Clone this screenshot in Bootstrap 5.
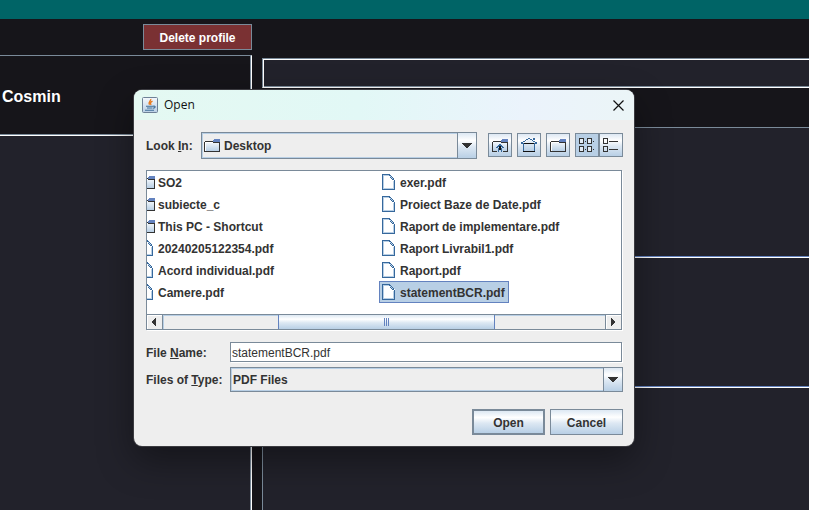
<!DOCTYPE html>
<html lang="en">
<head>
<meta charset="utf-8">
<meta name="viewport" content="width=device-width, initial-scale=1">
<title>Open</title>
<link href="https://cdn.jsdelivr.net/npm/bootstrap@5.3.0/dist/css/bootstrap.min.css" rel="stylesheet">
<style>
:root { --line: #7a8a99; --steel: linear-gradient(#dde8f3 0%, #ffffff 30%, #dde8f3 55%, #b8cfe5 100%); }
body { font-family: "Liberation Sans", Arial, sans-serif; font-size: 12px; line-height: 16px; color: #333; background: #fff; }
.app-window { background: #16151a; margin-right: 10px; }
.top-strip { height: 19px; background: #006466; }
.side-pane { width: 252px; }
.tool-strip { height: 36px; padding-top: 5px; }
.btn-delete { width: 109px; height: 26px; background: #7a3133; border: 1px solid var(--line); color: #fff; font-weight: 700; padding: 2px 0 0; }
.profile-frame { border-top: 1px solid var(--line); border-right: 1px solid #fff; box-shadow: inset -1px 0 var(--line); }
.profile-head { height: 80px; border-bottom: 1px solid #fff; box-shadow: inset 0 -1px var(--line); padding: 2px 2px 0; color: #fff; font-size: 16px; font-weight: 700; margin-right: 1px; }
.pane-fill { background: #22222b; margin-right: 1px; }
.main-pane { padding: 39px 0 0 10px; }
.title-frame { height: 30px; background: #22222b; border: 1px solid var(--line); border-right: 0; border-bottom-color: #fff; box-shadow: inset 1px 1px #fff, inset 0 -1px var(--line); }
.feed { margin-top: 39px; border-top: 1px solid var(--line); border-left: 1px solid var(--line); background: #22222b; }
.feed-item { height: 130px; border-bottom: 1px solid #fff; box-shadow: inset 0 -1px #6382bf; }

.file-dialog { position: absolute; left: 134px; top: 90px; width: 500px; background: #eee; border-radius: 8px; overflow: hidden; box-shadow: 0 0 0 1px #3b3b40, 0 14px 36px rgba(0,0,0,.4); }
.title-bar { height: 30px; padding: 0 8px; gap: 6px; background: linear-gradient(90deg, #e4f9f2 0%, #e2f8f6 45%, #ebf3fc 78%, #ebf5f7 100%); font-family: "Open Sans", "Noto Sans", sans-serif; color: #111; }
.close-btn { width: 15px; height: 24px; }
.dialog-body { padding: 12px 11px 11px 12px; font-weight: 700; }
.combo { position: relative; }
.combo select { width: 100%; height: 100%; appearance: none; border: 1px solid var(--line); border-radius: 0; background: #eee; box-shadow: inset 0 0 0 1px #b8cfe5; color: #333; font-weight: 700; padding: 0 22px 0 2px; }
.combo .combo-arrow { position: absolute; right: 0; top: 0; bottom: 0; width: 20px; border: 1px solid var(--line); background: var(--steel); pointer-events: none; }
.combo .combo-icon { position: absolute; left: 3px; top: 5px; pointer-events: none; }
.look-label { width: 44px; white-space: nowrap; }
.look-combo { height: 27px; margin: 0 11px; }
.look-combo select { padding-left: 22px; }
.type-combo { height: 25px; }
.tool-set { gap: 5px; margin-bottom: 1px; }
.tool-btn { width: 24px; height: 24px; padding: 0; border: 1px solid var(--line); background: var(--steel); display: grid; place-items: center; }
.tool-btn.picked { background: #b8cfe5; }
.file-frame { margin-top: 11px; margin-right: 1px; border: 1px solid var(--line); background: #fff; box-shadow: 1px 1px #fff; overflow: hidden; }
.file-columns { height: 143px; margin-left: -10px; }
.file-col { width: 242px; }
.file-item { height: 22px; padding: 0 3px 0 1px; border: 1px solid transparent; background: none; color: #333; font-weight: 700; display: flex; align-items: center; gap: 3px; width: max-content; }
.file-item span { padding-top: 2px; }
.file-item.picked { background: #b8cfe5; border-color: #6382bf; }
.scroll-row { height: 15px; border-top: 1px solid var(--line); background: #eee; }
.scroll-end { width: 16px; padding: 0 2px 0 0; border: 0; background: #eee; display: grid; place-items: center; box-shadow: inset 1px 1px #fff; }
.scroll-end.at-left { border-right: 1px solid var(--line); }
.scroll-end.at-right { border-left: 1px solid var(--line); }
.scroll-track { box-shadow: inset 1px 1px #b8cfe5; }
.scroll-thumb { height: 14px; border: 1px solid #6382bf; border-width: 0 1px; background: var(--steel); display: grid; place-items: center; }
.field-label { width: 84px; padding-top: 1px; }
.name-input { height: 20px; margin-right: 1px; padding: 2px 1px 0; border: 1px solid var(--line); box-shadow: 1px 1px #fff; color: #333; background: #fff; }
.action-btn { width: 73px; height: 26px; padding: 2px 0 0; border: 1px solid var(--line); background: var(--steel); color: #333; font-weight: 700; }
.action-btn.is-default { border-width: 2px; }
.name-row { margin-top: 12px; }
.type-row { margin-top: 5px; }
.action-row { margin-top: 17px; gap: 5px; }
svg { display: block; flex: none; }
</style>
</head>
<body>
<svg width="0" height="0" class="position-absolute" aria-hidden="true">
  <defs>
    <linearGradient id="steelFill" x1="0" y1="0" x2="0" y2="1"><stop offset="0" stop-color="#f4f8fc"/><stop offset="1" stop-color="#b8cfe5"/></linearGradient>
    <symbol id="folder" viewBox="0 0 16 16">
      <g shape-rendering="crispEdges">
        <path fill="url(#steelFill)" d="M1 5H15V14H1Z"/>
        <path fill="#fff" d="M1 5H9V6H1ZM1 5H2V14H1Z"/>
        <path fill="#333" d="M0 5H1V15H0ZM1 4H9V5H1ZM1 14H15V15H1ZM9 5H15V6H9ZM15 5H16V15H15Z"/>
        <path fill="#6382bf" d="M10 2H16V5H9V3H10Z"/>
      </g>
    </symbol>
    <symbol id="sheet" viewBox="0 0 16 16">
      <g shape-rendering="crispEdges">
        <path fill="#fff" d="M2 1H9L14 6V15H2Z"/>
        <path fill="#b8cfe5" d="M2 1H8V2H3V14H13V15H2ZM12 7H13V14H12Z"/>
        <path fill="#36689c" d="M1 0H9V1H2V15H13V7H14V16H1ZM9 1H10V2H9ZM10 2H11V3H10ZM11 3H12V4H11ZM12 4H13V6H12ZM13 6H14V7H13ZM8 1H9V2H8ZM9 3H10V4H9ZM10 4H11V5H10ZM11 5H12V6H11Z"/>
        <path fill="#b8cfe5" d="M9 2H10V3H9ZM10 3H11V4H10ZM11 4H12V5H11Z"/>
      </g>
    </symbol>
    <symbol id="arrowDown" viewBox="0 0 10 5"><path shape-rendering="crispEdges" fill="#333" d="M0 0H10V1H0ZM1 1H9V2H1ZM2 2H8V3H2ZM3 3H7V4H3ZM4 4H6V5H4Z"/></symbol>
  </defs>
</svg>

<div class="app-window d-flex flex-column vh-100 overflow-hidden">
  <header class="top-strip flex-shrink-0"></header>
  <div class="d-flex flex-grow-1">
    <aside class="side-pane d-flex flex-column flex-shrink-0">
      <div class="tool-strip d-flex justify-content-end align-items-start">
        <button type="button" class="btn-delete">Delete profile</button>
      </div>
      <div class="profile-frame d-flex flex-column flex-grow-1">
        <div class="profile-head d-flex align-items-center">Cosmin</div>
        <div class="pane-fill flex-grow-1"></div>
      </div>
    </aside>
    <main class="main-pane d-flex flex-column flex-grow-1">
      <div class="title-frame"></div>
      <div class="feed flex-grow-1">
        <div class="feed-item"></div>
        <div class="feed-item"></div>
      </div>
    </main>
  </div>
</div>

<section class="file-dialog" role="dialog" aria-label="Open">
  <div class="title-bar d-flex align-items-center">
    <svg width="16" height="16" viewBox="0 0 16 16" aria-hidden="true">
      <rect x=".5" y=".5" width="15" height="15" rx="1" fill="url(#steelFill)" stroke="#6e8196"/>
      <path d="M8.8 2C9.3 4 5.8 4.500 7.500 7.800M10.500 4.200C8 5.400 8.200 6 9 7.900" fill="none" stroke="#e87a1c" stroke-width="1.300"/>
      <path d="M4 9.300H11M5 11H10.500M3 13.200H12M11 9.300C14 8.500 13.800 11 11 11.300" fill="none" stroke="#3f6f98" stroke-width="1.100"/>
    </svg>
    <span>Open</span>
    <button type="button" class="close-btn btn p-0 border-0 ms-auto d-flex align-items-center justify-content-center" aria-label="Close">
      <svg width="11" height="11" viewBox="0 0 11 11"><path d="M.5 .5L10.500 10.500M10.500 .5L.5 10.500" stroke="#111" stroke-width="1.200"/></svg>
    </button>
  </div>

  <form class="dialog-body">
    <div class="d-flex align-items-center">
      <label class="look-label" for="lookIn">Look <u>I</u>n:</label>
      <div class="combo look-combo flex-grow-1">
        <select id="lookIn"><option>Desktop</option></select>
        <svg class="combo-icon" width="16" height="16"><use href="#folder"/></svg>
        <span class="combo-arrow d-flex align-items-center justify-content-center"><svg width="10" height="5"><use href="#arrowDown"/></svg></span>
      </div>
      <div class="tool-set d-flex">
        <button type="button" class="tool-btn" aria-label="Up one level">
          <svg width="16" height="16" viewBox="0 0 16 16"><g shape-rendering="crispEdges"><path fill="url(#steelFill)" d="M1 5H15V14H1Z"/><path fill="#333" d="M0 5H1V15H0ZM1 4H9V5H1ZM1 14H5V15H1ZM11 14H15V15H11ZM9 5H15V6H9ZM15 5H16V15H15Z"/><path fill="#6382bf" d="M10 2H16V5H9V3H10Z"/><path fill="#36689c" d="M7 7H9V8H7ZM6 8H10V9H6ZM5 9H7V10H5ZM9 9H11V10H9ZM4 10H6V11H4ZM10 10H12V11H10ZM7 9H9V11H7ZM6 11H7V15H6ZM9 11H10V15H9Z"/><path fill="#111" d="M7 9H9V13H7Z"/></g></svg>
        </button>
        <button type="button" class="tool-btn" aria-label="Home">
          <svg width="16" height="16" viewBox="0 0 16 16"><g shape-rendering="crispEdges"><path fill="url(#steelFill)" d="M3 7H13V14H3ZM7 2H9L13 6H3Z"/><path fill="#36689c" d="M7 1H9V2H7ZM5 2H7V3H5ZM9 2H11V3H9ZM4 3H5V4H4ZM11 3H12V4H11ZM2 4H4V5H2ZM12 4H14V5H12ZM0 5H2V6H0ZM14 5H16V6H14ZM0 6H16V7H0ZM12 1H14V3H12ZM2 7H3V14H2ZM13 7H14V14H13Z"/><path fill="#111" d="M2 14H14V15H2ZM3 6H13V7H3Z"/></g></svg>
        </button>
        <button type="button" class="tool-btn" aria-label="New folder"><svg width="16" height="16"><use href="#folder"/></svg></button>
        <div class="d-flex">
          <button type="button" class="tool-btn picked" aria-label="List view">
            <svg width="16" height="14" viewBox="0 0 16 14"><g shape-rendering="crispEdges" fill="#333"><path fill="#fff" d="M1 1H4V5H1ZM9 1H12V5H9ZM1 9H4V13H1ZM9 9H12V13H9Z" opacity=".6"/><path fill-rule="evenodd" d="M0 0H4L5 1V6H0ZM1 1V5H4V1ZM8 0H12L13 1V6H8ZM9 1V5H12V1ZM0 8H4L5 9V14H0ZM1 9V13H4V9ZM8 8H12L13 9V14H8ZM9 9V13H12V9Z"/><path d="M6 3H7V4H6ZM14 3H15V4H14ZM6 11H7V12H6ZM14 11H15V12H14Z"/></g></svg>
          </button>
          <button type="button" class="tool-btn" aria-label="Details">
            <svg width="16" height="14" viewBox="0 0 16 14"><g shape-rendering="crispEdges" fill="#333"><path fill-rule="evenodd" d="M0 0H4L5 1V6H0ZM1 1V5H4V1ZM0 8H4L5 9V14H0ZM1 9V13H4V9Z"/><path d="M6 3H15V4H6ZM6 11H15V12H6Z"/></g></svg>
          </button>
        </div>
      </div>
    </div>

    <div class="file-frame">
      <div class="file-columns d-flex">
        <div class="file-col flex-shrink-0">
          <button type="button" class="file-item"><svg width="16" height="16"><use href="#folder"/></svg><span>SO2</span></button>
          <button type="button" class="file-item"><svg width="16" height="16"><use href="#folder"/></svg><span>subiecte_c</span></button>
          <button type="button" class="file-item"><svg width="16" height="16"><use href="#folder"/></svg><span>This PC - Shortcut</span></button>
          <button type="button" class="file-item"><svg width="16" height="16"><use href="#sheet"/></svg><span>20240205122354.pdf</span></button>
          <button type="button" class="file-item"><svg width="16" height="16"><use href="#sheet"/></svg><span>Acord individual.pdf</span></button>
          <button type="button" class="file-item"><svg width="16" height="16"><use href="#sheet"/></svg><span>Camere.pdf</span></button>
        </div>
        <div class="file-col flex-shrink-0">
          <button type="button" class="file-item"><svg width="16" height="16"><use href="#sheet"/></svg><span>exer.pdf</span></button>
          <button type="button" class="file-item"><svg width="16" height="16"><use href="#sheet"/></svg><span>Proiect Baze de Date.pdf</span></button>
          <button type="button" class="file-item"><svg width="16" height="16"><use href="#sheet"/></svg><span>Raport de implementare.pdf</span></button>
          <button type="button" class="file-item"><svg width="16" height="16"><use href="#sheet"/></svg><span>Raport Livrabil1.pdf</span></button>
          <button type="button" class="file-item"><svg width="16" height="16"><use href="#sheet"/></svg><span>Raport.pdf</span></button>
          <button type="button" class="file-item picked"><svg width="16" height="16"><use href="#sheet"/></svg><span>statementBCR.pdf</span></button>
        </div>
      </div>
      <div class="scroll-row d-flex">
        <button type="button" class="scroll-end at-left" aria-label="Scroll left"><svg width="4" height="8" viewBox="0 0 4 8"><path shape-rendering="crispEdges" fill="#333" d="M3 0H4V8H3ZM2 1H3V7H2ZM1 2H2V6H1ZM0 3H1V5H0Z"/></svg></button>
        <div class="scroll-track flex-grow-1">
          <div class="scroll-thumb" style="width:49.2%;margin-left:26%"><svg width="6" height="8" viewBox="0 0 6 8"><path shape-rendering="crispEdges" fill="#6382bf" d="M0 0H1V8H0ZM2 0H3V8H2ZM4 0H5V8H4Z"/></svg></div>
        </div>
        <button type="button" class="scroll-end at-right" aria-label="Scroll right"><svg width="4" height="8" viewBox="0 0 4 8"><path shape-rendering="crispEdges" fill="#333" d="M0 0H1V8H0ZM1 1H2V7H1ZM2 2H3V6H2ZM3 3H4V5H3Z"/></svg></button>
      </div>
    </div>

    <div class="name-row d-flex align-items-center">
      <label class="field-label" for="fileName">File <u>N</u>ame:</label>
      <input id="fileName" class="name-input flex-grow-1" type="text" value="statementBCR.pdf">
    </div>
    <div class="type-row d-flex align-items-center">
      <label class="field-label" for="fileType">Files of <u>T</u>ype:</label>
      <div class="combo type-combo flex-grow-1">
        <select id="fileType"><option>PDF Files</option></select>
        <span class="combo-arrow d-flex align-items-center justify-content-center"><svg width="10" height="5"><use href="#arrowDown"/></svg></span>
      </div>
    </div>
    <div class="action-row d-flex justify-content-end">
      <button type="button" class="action-btn is-default">Open</button>
      <button type="button" class="action-btn">Cancel</button>
    </div>
  </form>
</section>
<script src="https://cdn.jsdelivr.net/npm/bootstrap@5.3.0/dist/js/bootstrap.bundle.min.js"></script>
</body>
</html>
